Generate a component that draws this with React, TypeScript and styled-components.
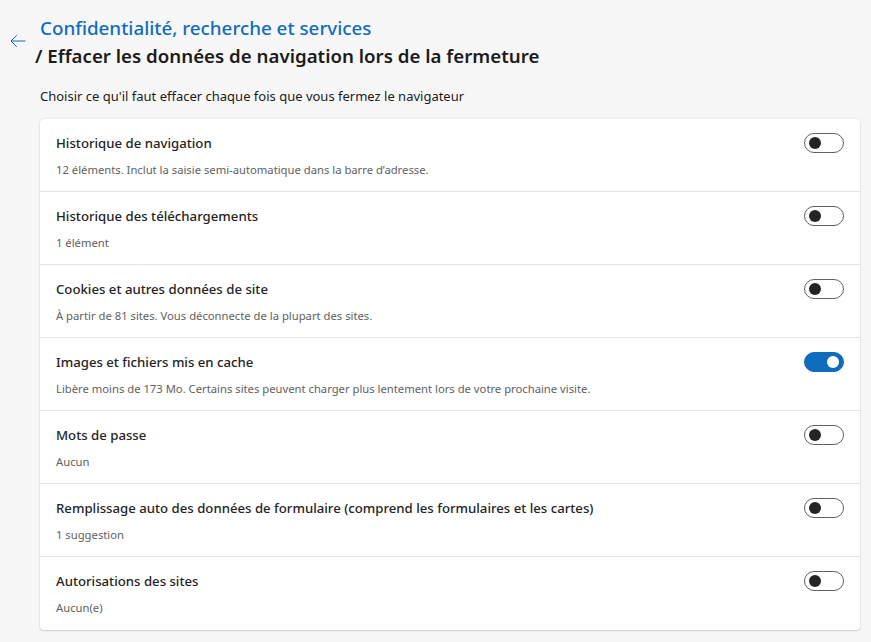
import styled, { createGlobalStyle } from "styled-components";

const GlobalStyle = createGlobalStyle`
  body {
    margin: 0;
    background: #f7f7f7;
    font-family: "Segoe UI", "Noto Sans", sans-serif;
    color: #1b1b1b;
  }
`;

const Page = styled.main`
  padding: 14px 11px 12px 10px;
  width: 871px;
  box-sizing: border-box;
`;

const Header = styled.header`
  display: flex;
  align-items: flex-start;
  gap: 9px;
`;

const BackButton = styled.button`
  border: none;
  background: none;
  padding: 0;
  margin-top: 19px;
  width: 16px;
  height: 16px;
  color: #0f6cbd;
  display: flex;
`;

const Titles = styled.div`
  display: flex;
  flex-direction: column;
`;

const Crumb = styled.h1`
  margin: 0 0 0 5px;
  font-size: 18.8px;
  line-height: 28px;
  font-weight: 500;
  color: #0f6cbd;
`;

const Current = styled.h2`
  margin: 0;
  font-size: 18.7px;
  line-height: 28px;
  font-weight: 600;
  color: #1b1b1b;
`;

const Intro = styled.p`
  margin: 17px 0 14px 30px;
  font-size: 13px;
  line-height: 18px;
  color: #1b1b1b;
`;

const Card = styled.section`
  margin-left: 30px;
  background: #fff;
  border-radius: 4px;
  box-shadow: 0 0 2px rgba(0, 0, 0, 0.12), 0 1px 2px rgba(0, 0, 0, 0.14);
`;

const Row = styled.div`
  display: grid;
  grid-template-columns: 1fr auto;
  align-items: start;
  height: 73px;
  box-sizing: border-box;
  padding: 14px 16px 0 16px;

  &:not(:last-child) {
    border-bottom: 1px solid #e5e5e5;
  }
`;

const RowTitle = styled.div`
  font-size: 13.2px;
  line-height: 20px;
  font-weight: 500;
  color: #242424;
`;

const RowDesc = styled.div`
  margin-top: 9px;
  font-size: 11.25px;
  line-height: 16px;
  color: #616161;
`;

const Track = styled.span<{ $on: boolean }>`
  display: flex;
  align-items: center;
  justify-content: ${(p) => (p.$on ? "flex-end" : "flex-start")};
  width: 40px;
  height: 20px;
  box-sizing: border-box;
  padding: 0 4px;
  border-radius: 10px;
  border: 1px solid ${(p) => (p.$on ? "#0f6cbd" : "#616161")};
  background: ${(p) => (p.$on ? "#0f6cbd" : "#fff")};
`;

const Knob = styled.span<{ $on: boolean }>`
  width: 12px;
  height: 12px;
  border-radius: 50%;
  background: ${(p) => (p.$on ? "#fff" : "#242424")};
`;

const items = [
  {
    title: "Historique de navigation",
    desc: "12 éléments. Inclut la saisie semi-automatique dans la barre d’adresse.",
    on: false,
  },
  { title: "Historique des téléchargements", desc: "1 élément", on: false },
  {
    title: "Cookies et autres données de site",
    desc: "À partir de 81 sites. Vous déconnecte de la plupart des sites.",
    on: false,
  },
  {
    title: "Images et fichiers mis en cache",
    desc: "Libère moins de 173 Mo. Certains sites peuvent charger plus lentement lors de votre prochaine visite.",
    on: true,
  },
  { title: "Mots de passe", desc: "Aucun", on: false },
  {
    title: "Remplissage auto des données de formulaire (comprend les formulaires et les cartes)",
    desc: "1 suggestion",
    on: false,
  },
  { title: "Autorisations des sites", desc: "Aucun(e)", on: false },
];

function Toggle({ on }: { on: boolean }) {
  return (
    <Track $on={on} role="switch" aria-checked={on}>
      <Knob $on={on} />
    </Track>
  );
}

export default function App() {
  return (
    <>
      <GlobalStyle />
      <Page>
        <Header>
          <BackButton aria-label="Retour">
            <svg width="16" height="16" viewBox="0 0 16 16" fill="none">
              <path
                d="M15.5 8H1M6.8 2.2L1 8L6.8 13.8"
                stroke="currentColor"
                strokeWidth="1"
              />
            </svg>
          </BackButton>
          <Titles>
            <Crumb>Confidentialité, recherche et services</Crumb>
            <Current>/ Effacer les données de navigation lors de la fermeture</Current>
          </Titles>
        </Header>
        <Intro>Choisir ce qu'il faut effacer chaque fois que vous fermez le navigateur</Intro>
        <Card>
          {items.map((it) => (
            <Row key={it.title}>
              <div>
                <RowTitle>{it.title}</RowTitle>
                <RowDesc>{it.desc}</RowDesc>
              </div>
              <Toggle on={it.on} />
            </Row>
          ))}
        </Card>
      </Page>
    </>
  );
}
